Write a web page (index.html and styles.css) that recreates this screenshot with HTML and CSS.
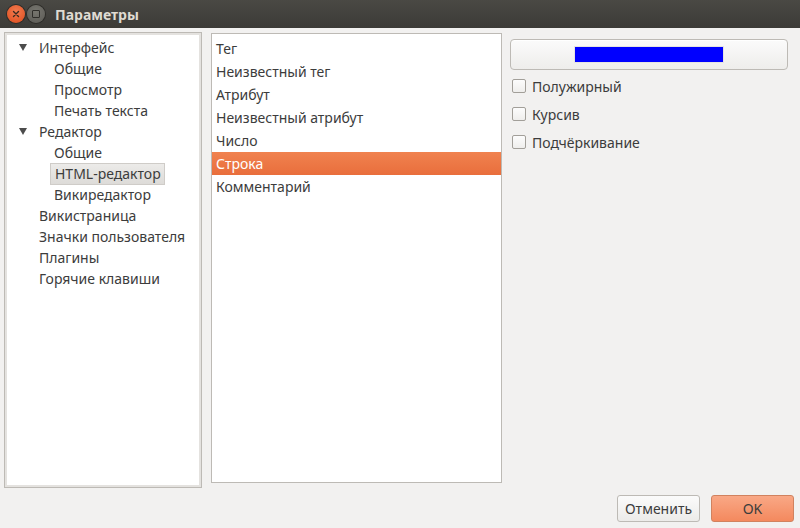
FILE: index.html
```html
<!DOCTYPE html>
<html>
<head>
<meta charset="utf-8">
<link rel="stylesheet" href="styles.css">
</head>
<body>
<div class="window">
  <div class="titlebar">
    <span class="wbtn close"><svg width="10" height="10" viewBox="0 0 10 10"><path d="M2.5 2.5 L7.5 7.5 M7.5 2.5 L2.5 7.5" stroke="#3a2a20" stroke-width="1.4" stroke-linecap="round"/></svg></span>
    <span class="wbtn min"><span class="sq"></span></span>
    <span class="title">Параметры</span>
  </div>
  <div class="content">
    <div class="main">
      <div class="tree">
        <div class="node top"><span class="arrow"></span>Интерфейс</div>
        <div class="node child">Общие</div>
        <div class="node child">Просмотр</div>
        <div class="node child">Печать текста</div>
        <div class="node top"><span class="arrow"></span>Редактор</div>
        <div class="node child">Общие</div>
        <div class="node child"><span class="sel">HTML-редактор</span></div>
        <div class="node child">Викиредактор</div>
        <div class="node top leaf">Викистраница</div>
        <div class="node top leaf">Значки пользователя</div>
        <div class="node top leaf">Плагины</div>
        <div class="node top leaf">Горячие клавиши</div>
      </div>
      <div class="list">
        <div class="item">Тег</div>
        <div class="item">Неизвестный тег</div>
        <div class="item">Атрибут</div>
        <div class="item">Неизвестный атрибут</div>
        <div class="item">Число</div>
        <div class="item active">Строка</div>
        <div class="item">Комментарий</div>
      </div>
      <div class="props">
        <div class="colorbtn"><span class="swatch"></span></div>
        <label class="check"><span class="box"></span>Полужирный</label>
        <label class="check"><span class="box"></span>Курсив</label>
        <label class="check"><span class="box"></span>Подчёркивание</label>
      </div>
    </div>
    <div class="buttons">
      <button class="btn">Отменить</button>
      <button class="btn ok">OK</button>
    </div>
  </div>
</div>
</body>
</html>
```
FILE: styles.css
```css
html, body {
  margin: 0;
  padding: 0;
}
body {
  width: 800px;
  height: 528px;
  overflow: hidden;
  background: #f2f1f0;
  font-family: "Noto Sans", "Open Sans", sans-serif;
  font-size: 14px;
  color: #3c3c3c;
}
.window {
  display: flex;
  flex-direction: column;
  height: 528px;
}
.titlebar {
  height: 28px;
  background: linear-gradient(#4a4944, #3c3b37);
  display: flex;
  align-items: center;
  padding-left: 7px;
  box-sizing: border-box;
}
.wbtn {
  width: 18px;
  height: 18px;
  border-radius: 50%;
  display: flex;
  align-items: center;
  justify-content: center;
  margin-right: 2px;
}
.close {
  background: radial-gradient(circle at 50% 35%, #f37b4f, #dd4b1c);
  box-shadow: 0 0 0 1px #2e2d29;
}
.min {
  background: radial-gradient(circle at 50% 35%, #77766f, #5a5954);
  box-shadow: 0 0 0 1px #2e2d29;
}
.sq {
  width: 6px;
  height: 6px;
  border: 1px solid #2f2e2a;
  border-radius: 1px;
}
.title {
  margin-left: 8px;
  color: #dfdbd2;
  font-weight: bold;
  font-size: 14px;
}
.content {
  flex: 1;
  display: flex;
  flex-direction: column;
  padding: 4px 6px 6px 4px;
}
.main {
  display: flex;
  align-items: flex-start;
  gap: 0;
}
.tree {
  width: 198px;
  height: 456px;
  box-sizing: border-box;
  border: 1px solid #bdbab5;
  box-shadow: inset 0 0 0 2px #e4e2df;
  background: #fff;
  padding-top: 4px;
}
.node {
  height: 21px;
  line-height: 21px;
  white-space: nowrap;
  display: flex;
  align-items: center;
}
.node.top {
  padding-left: 14px;
}
.node.leaf {
  padding-left: 34px;
}
.node.child {
  padding-left: 49px;
}
.arrow {
  width: 0;
  height: 0;
  border-left: 4px solid transparent;
  border-right: 4px solid transparent;
  border-top: 7px solid #4c4c4c;
  margin-right: 12px;
  margin-left: 0;
}
.sel {
  background: linear-gradient(#ecebe9, #dddbd8);
  border: 1px solid #cfccc8;
  padding: 0 3px 0 4px;
  height: 20px;
  line-height: 20px;
  margin-left: -4px;
}
.list {
  margin-left: 9px;
  width: 291px;
  height: 450px;
  box-sizing: border-box;
  border: 1px solid #bdbab5;
  background: #fff;
  margin-top: 1px;
  padding-top: 3px;
}
.item {
  height: 23px;
  line-height: 23px;
  padding-left: 4px;
  white-space: nowrap;
}
.item.active {
  background: linear-gradient(#f0824f, #e96e3c);
  color: #fff;
}
.props {
  margin-left: 8px;
  flex: 1;
  display: flex;
  flex-direction: column;
  padding-top: 7px;
}
.colorbtn {
  height: 31px;
  box-sizing: border-box;
  border: 1px solid #bdbab5;
  border-radius: 4px;
  background: linear-gradient(#fbfbfb, #eeedeb);
  display: flex;
  align-items: center;
  justify-content: center;
  margin-right: 6px;
  box-shadow: inset 0 1px 0 #ffffff;
}
.swatch {
  width: 148px;
  height: 15px;
  background: #0000ff;
  border: 1px solid #e6e4e1;
}
.check {
  height: 28px;
  display: flex;
  align-items: center;
  padding-left: 2px;
}
.check:first-of-type {
  margin-top: 2px;
}
.box {
  width: 12px;
  height: 12px;
  border: 1px solid #a29f99;
  border-radius: 2px;
  background: linear-gradient(#fcfcfc, #efeeec);
  margin-right: 6px;
}
.buttons {
  margin-top: auto;
  display: flex;
  justify-content: flex-end;
  gap: 11px;
  padding-bottom: 0;
}
.btn {
  width: 83px;
  height: 27px;
  border: 1px solid #bdbab5;
  border-radius: 3px;
  background: linear-gradient(#fbfbfb, #ecebe9);
  font-family: inherit;
  font-size: 14px;
  color: #3c3c3c;
  padding: 0;
}
.btn.ok {
  background: linear-gradient(#f9a886, #f4895e);
  border-color: #d1825f;
}
```
